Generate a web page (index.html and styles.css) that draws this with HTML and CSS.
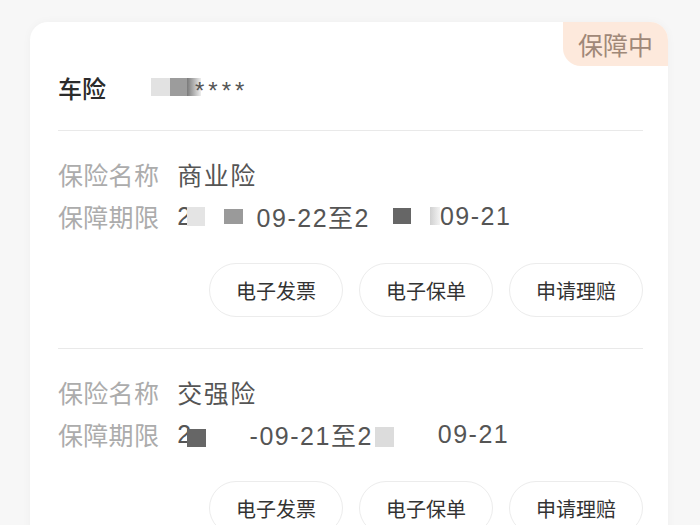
FILE: index.html
```html
<!DOCTYPE html>
<html lang="zh-CN">
<head>
<meta charset="utf-8">
<title>车险保单</title>
<link rel="stylesheet" href="styles.css">
</head>
<body>
<div class="page">
  <div class="card">
    <div class="badge">保障中</div>
    <div class="header">
      <span class="title">车险</span>
      <span class="mask m-h1"></span><span class="mask m-h2"></span><span class="mask m-h3"></span>
      <span class="stars">****</span>
    </div>
    <div class="section">
      <div class="row"><span class="label">保险名称</span><span class="value">商业险</span></div>
      <div class="row"><span class="label">保障期限</span><span class="value">2<span class="mask m-a"></span><span class="mask m-b"></span>09-22至2<span class="mask m-c"></span><span class="mask m-d"></span>09-21</span></div>
      <div class="actions">
        <button class="btn">电子发票</button>
        <button class="btn">电子保单</button>
        <button class="btn">申请理赔</button>
      </div>
    </div>
    <div class="section">
      <div class="row"><span class="label">保险名称</span><span class="value">交强险</span></div>
      <div class="row"><span class="label">保障期限</span><span class="value">2<span class="mask m-e"></span>-09-21至2<span class="mask m-f"></span>09-21</span></div>
      <div class="actions">
        <button class="btn">电子发票</button>
        <button class="btn">电子保单</button>
        <button class="btn">申请理赔</button>
      </div>
    </div>
  </div>
</div>
</body>
</html>
```

FILE: styles.css
```css
* { box-sizing: border-box; }
html, body { margin: 0; padding: 0; }
body {
  background: #f7f7f7;
  font-family: "Noto Sans CJK SC", "Noto Sans", sans-serif;
  width: 700px;
  height: 525px;
  overflow: hidden;
}
.page {
  padding: 22px 32px 0 30px;
}
.card {
  position: relative;
  background: #fff;
  border-radius: 18px;
  padding: 0 25px 0 28px;
  box-shadow: 0 0 10px rgba(0, 0, 0, 0.035);
  min-height: 520px;
}
.badge {
  position: absolute;
  top: 0;
  right: 0;
  width: 105px;
  height: 44px;
  background: #fde9dc;
  color: #a08878;
  font-size: 25px;
  line-height: 44px;
  text-align: center;
  border-radius: 0 18px 0 18px;
}
.header {
  display: flex;
  align-items: center;
  height: 109px;
  padding-top: 22px;
  border-bottom: 1px solid #e9e9e9;
}
.title {
  font-size: 24px;
  font-weight: 500;
  color: #2b2b2b;
  width: 93px;
}
.mask {
  display: inline-block;
  vertical-align: middle;
}
.m-h1 { width: 19px; height: 18px; background: #e2e2e2; }
.m-h2 { width: 17px; height: 18px; background: #9c9c9c; }
.m-h3 { width: 14px; height: 18px; background: linear-gradient(90deg, #7a7a7a, rgba(140,140,140,0.15)); margin-right: -6px; }
.stars {
  font-family: "Liberation Sans", sans-serif;
  font-size: 24px;
  color: #555;
  letter-spacing: 4px;
  padding-top: 8px;
}
.section {
  padding: 22px 0 31px;
  border-bottom: 1px solid #e9e9e9;
}
.row {
  display: flex;
  align-items: center;
  height: 42px;
  font-size: 25px;
}
.label {
  color: #acacac;
  margin-right: 18px;
  letter-spacing: 0.3px;
}
.value {
  color: #555;
  display: flex;
  align-items: center;
  font-family: "Liberation Sans", "Noto Sans CJK SC", sans-serif;
  letter-spacing: 1.5px;
}
.m-a { width: 18px; height: 19px; background: #e4e4e4; margin: 0 19px 0 -6px; }
.m-b { width: 19px; height: 15px; background: #9a9a9a; margin-right: 14px; }
.m-c { width: 18px; height: 16px; background: #666; margin: 0 19px 0 23px; }
.m-d { width: 10px; height: 18px; background: linear-gradient(90deg, #d0d0d0, #f3f3f3); }
.m-e { width: 19px; height: 18px; background: #666; margin: 8px 44px 0 -6px; }
.m-f { width: 19px; height: 20px; background: #dcdcdc; margin: 6px 44px 0 2px; }
.actions {
  display: flex;
  justify-content: flex-end;
  gap: 16px;
  margin-top: 26px;
}
.btn {
  width: 134px;
  height: 54px;
  border: 1px solid #ececec;
  border-radius: 27px;
  background: #fff;
  font-family: inherit;
  font-size: 20px;
  color: #333;
  padding: 0;
}
```
